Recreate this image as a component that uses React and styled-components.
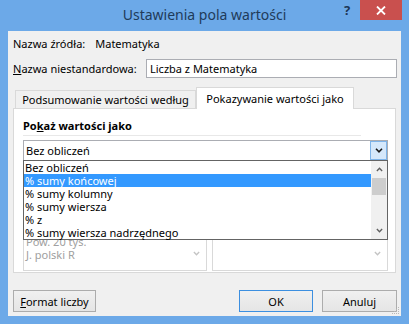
import React from 'react'
import styled, { createGlobalStyle } from 'styled-components'

const Global = createGlobalStyle`
  body { margin: 0; }
  * { box-sizing: border-box; }
`

const Window = styled.div`
  width: 409px;
  height: 324px;
  background: #6ca9e8;
  display: flex;
  flex-direction: column;
  font-family: "Noto Sans", "Open Sans", sans-serif;
  font-size: 11px;
  color: #000;
  overflow: hidden;
`

const TitleBar = styled.div`
  height: 31px;
  display: grid;
  grid-template-columns: 1fr auto 1fr;
  align-items: start;
`

const Title = styled.div`
  grid-column: 2;
  font-size: 14px;
  line-height: 30px;
  color: #1f3b5a;
  white-space: nowrap;
`

const Controls = styled.div`
  grid-column: 3;
  justify-self: end;
  display: flex;
  margin-right: 7px;
`

const HelpButton = styled.div`
  width: 26px;
  height: 20px;
  display: flex;
  align-items: center;
  justify-content: center;
  font-weight: bold;
  font-size: 13px;
  color: #1c3656;
`

const CloseButton = styled.div`
  width: 42px;
  height: 20px;
  background: #c9504e;
  display: flex;
  align-items: center;
  justify-content: center;
`

const Client = styled.div`
  position: relative;
  flex: 1;
  margin: 0 8px 8px 8px;
  background: #f0f0f0;
  padding: 6px 4px 0 5px;
  display: flex;
  flex-direction: column;
`

const Row = styled.div`
  display: flex;
  align-items: center;
  gap: ${p => p.$gap || 0}px;
  margin-top: ${p => p.$top || 0}px;
  line-height: 14px;
  white-space: nowrap;
`

const Input = styled.div`
  margin-left: auto;
  width: 251px;
  height: 19px;
  background: #fff;
  border: 1px solid #abadb3;
  padding-left: 3px;
  line-height: 17px;
`

const TabStrip = styled.div`
  display: flex;
  align-items: flex-end;
  height: 21px;
  margin-top: 9px;
  padding-left: 2px;
  position: relative;
  z-index: 1;
`

const Tab = styled.div`
  width: ${p => p.$w}px;
  height: ${p => (p.$active ? 22 : 18)}px;
  margin-bottom: ${p => (p.$active ? -1 : 0)}px;
  background: ${p => (p.$active ? '#fff' : '#f0f0f0')};
  border: 1px solid #d9d9d9;
  border-bottom: none;
  display: flex;
  align-items: center;
  justify-content: center;
  padding-bottom: ${p => (p.$active ? 1 : 0)}px;
  white-space: nowrap;
`

const Panel = styled.div`
  margin-right: 1px;
  background: #fff;
  border: 1px solid #d9d9d9;
  padding: 10px 7px 1px 9px;
  display: flex;
  flex-direction: column;
`

const Heading = styled.div`
  font-weight: bold;
  line-height: 14px;
`

const Divider = styled.div`
  width: 338px;
  height: 1px;
  margin-top: 2px;
  background: #e8e8e8;
`

const Combo = styled.div`
  position: relative;
  margin-top: 4px;
  height: 21px;
  border: 1px solid #abadb3;
  display: flex;
  align-items: center;
  padding-left: 2px;
`

const ComboArrow = styled.div`
  margin-left: auto;
  align-self: stretch;
  width: 17px;
  background: #d5e8fb;
  border: 1px solid #7eb4ea;
  display: flex;
  align-items: center;
  justify-content: center;
`

const DropList = styled.div`
  position: absolute;
  left: -1px;
  right: -1px;
  top: 100%;
  height: 80px;
  background: #fff;
  border: 1px solid #646464;
  display: flex;
  z-index: 2;
`

const Items = styled.div`
  flex: 1;
  display: flex;
  flex-direction: column;
`

const Item = styled.div`
  height: 13px;
  line-height: 13px;
  padding-left: 1px;
  white-space: nowrap;
  background: ${p => (p.$selected ? '#3399ff' : 'transparent')};
  color: ${p => (p.$selected ? '#fff' : '#000')};
`

const ScrollBar = styled.div`
  width: 16px;
  display: flex;
  flex-direction: column;
  background: #f0f0f0;
`

const ScrollButton = styled.div`
  height: 17px;
  display: flex;
  align-items: center;
  justify-content: center;
`

const Thumb = styled.div`
  height: 17px;
  margin: 0 1px 0 1px;
  background: #cdcdcd;
`

const Spacer = styled.div`
  flex: 1;
`

const ListsRow = styled.div`
  display: flex;
  gap: 5px;
  margin-top: 73px;
`

const ListBox = styled.div`
  width: ${p => (p.$w ? `${p.$w}px` : 'auto')};
  flex: ${p => (p.$w ? 'none' : 1)};
  height: 37px;
  border: 1px solid #d9d9d9;
  background: #fff;
  display: flex;
`

const DisabledItems = styled.div`
  flex: 1;
  padding: 0 0 0 2px;
  color: #a0a0a0;
  line-height: 13px;
  display: flex;
  flex-direction: column;
`

const DisabledScroll = styled.div`
  width: 20px;
  display: flex;
  flex-direction: column;
  align-items: center;
  padding-top: 16px;
`

const ButtonRow = styled.div`
  display: flex;
  gap: 9px;
  margin-top: 17px;
`

const Button = styled.div`
  width: ${p => p.$w}px;
  height: 22px;
  border: 1px solid ${p => (p.$default ? '#3c8fe0' : '#acacac')};
  background: linear-gradient(#f0f0f0, #e5e5e5);
  display: flex;
  align-items: center;
  justify-content: center;
  margin-left: ${p => (p.$push ? 'auto' : 0)};
  white-space: nowrap;
`

const Grip = styled.svg`
  position: absolute;
  right: 1px;
  bottom: 1px;
`

const U = styled.span`
  text-decoration: underline;
`

const Chevron = ({ up, color = '#000', w = 8 }) => (
  <svg width={w} height="5" viewBox="0 0 8 5">
    <path
      d={up ? 'M1 4.2 L4 1.2 L7 4.2' : 'M1 0.8 L4 3.8 L7 0.8'}
      fill="none"
      stroke={color}
      strokeWidth="1.6"
    />
  </svg>
)

const options = [
  'Bez obliczeń',
  '% sumy końcowej',
  '% sumy kolumny',
  '% sumy wiersza',
  '% z',
  '% sumy wiersza nadrzędnego',
]

export default function App() {
  return (
    <Window>
      <Global />
      <TitleBar>
        <Title>Ustawienia pola wartości</Title>
        <Controls>
          <HelpButton>?</HelpButton>
          <CloseButton>
            <svg width="10" height="9" viewBox="0 0 10 9">
              <path d="M1 0.5 L9 8.5 M9 0.5 L1 8.5" stroke="#fff" strokeWidth="1.8" />
            </svg>
          </CloseButton>
        </Controls>
      </TitleBar>

      <Client>
        <Row $gap={10}>
          <span>Nazwa źródła:</span>
          <span>Matematyka</span>
        </Row>
        <Row $top={8}>
          <span><U>N</U>azwa niestandardowa:</span>
          <Input>Liczba z Matematyka</Input>
        </Row>

        <TabStrip>
          <Tab $w={181}>Podsumowanie wartości według</Tab>
          <Tab $w={158} $active>Pokazywanie wartości jako</Tab>
        </TabStrip>

        <Panel>
          <Heading>Po<U>k</U>aż wartości jako</Heading>
          <Divider />
          <Combo>
            Bez obliczeń
            <ComboArrow>
              <Chevron color="#1a1a1a" />
            </ComboArrow>
            <DropList>
              <Items>
                {options.map((o, i) => (
                  <Item key={o} $selected={i === 1}>{o}</Item>
                ))}
              </Items>
              <ScrollBar>
                <ScrollButton><Chevron up color="#606060" w={7} /></ScrollButton>
                <Thumb />
                <Spacer />
                <ScrollButton><Chevron color="#606060" w={7} /></ScrollButton>
              </ScrollBar>
            </DropList>
          </Combo>

          <ListsRow>
            <ListBox $w={184}>
              <DisabledItems>
                <span>Pow. 20 tys.</span>
                <span>J. polski R</span>
              </DisabledItems>
              <DisabledScroll>
                <Chevron color="#c4c4c4" w={7} />
              </DisabledScroll>
            </ListBox>
            <ListBox>
              <DisabledItems />
              <DisabledScroll>
                <Chevron color="#c4c4c4" w={7} />
              </DisabledScroll>
            </ListBox>
          </ListsRow>
        </Panel>

        <ButtonRow>
          <Button $w={83}><U>F</U>ormat liczby</Button>
          <Button $w={74} $default $push>OK</Button>
          <Button $w={75}>Anuluj</Button>
        </ButtonRow>

        <Grip width="10" height="10" viewBox="0 0 10 10">
          <g fill="#b8b8b8">
            <rect x="8" y="2" width="1" height="1" />
            <rect x="6" y="4" width="1" height="1" />
            <rect x="8" y="4" width="1" height="1" />
            <rect x="4" y="6" width="1" height="1" />
            <rect x="6" y="6" width="1" height="1" />
            <rect x="8" y="6" width="1" height="1" />
            <rect x="2" y="8" width="1" height="1" />
            <rect x="4" y="8" width="1" height="1" />
            <rect x="6" y="8" width="1" height="1" />
            <rect x="8" y="8" width="1" height="1" />
          </g>
        </Grip>
      </Client>
    </Window>
  )
}
